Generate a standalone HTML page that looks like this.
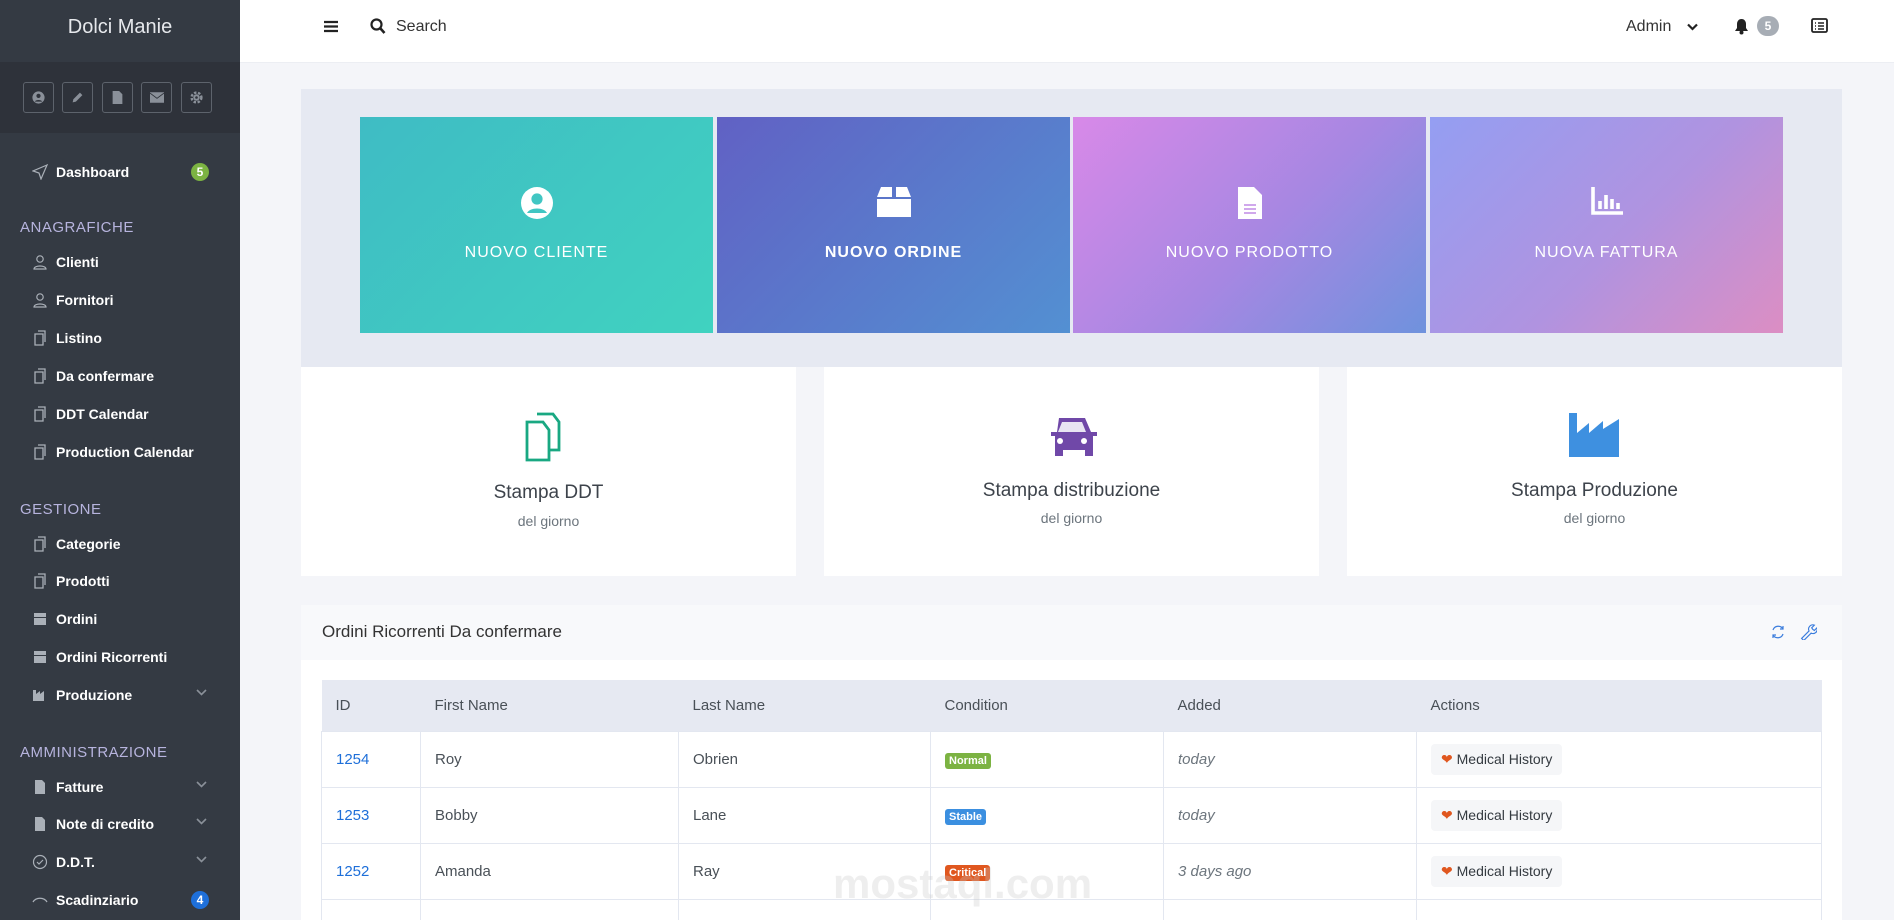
<!DOCTYPE html>
<html style="width:1894px;height:920px;overflow:hidden"><head><meta charset="utf-8"><style>
*{box-sizing:border-box;margin:0;padding:0}
body{width:1894px;height:920px;overflow:hidden;background:#f4f5f9;font-family:"Liberation Sans",sans-serif;position:relative;color:#495057}
.abs{position:absolute}
#sb{left:0;top:0;width:240px;height:920px;background:#343a43}
.logo{left:0;top:0;width:240px;height:62px;color:#e6e8ec;font-size:20px;text-align:center;line-height:54px}
.band{left:0;top:62px;width:240px;height:71px;background:#2e323a}
.ib{top:82px;width:31px;height:31px;border:1px solid #5d636c;border-radius:3px;display:flex;align-items:center;justify-content:center}
.item{left:56px;color:#fff;font-size:14px;font-weight:bold;height:20px;line-height:20px;margin-top:-10px}
.ico{left:32px;width:16px;height:16px;margin-top:-8px}
.sec{left:20px;color:#b7b4de;font-size:15px;letter-spacing:.5px;margin-top:-9px}
.chev{left:196px;margin-top:-6px}
.badge{border-radius:10px;color:#fff;font-size:12px;font-weight:bold;text-align:center}
#hd{left:240px;top:0;width:1654px;height:62px;background:#fff}
.tile{top:117px;height:216px;width:353px;color:#fff;text-align:center;font-size:16px;letter-spacing:1px}
.tile svg{position:absolute;left:50%;top:70px;transform:translateX(-50%)}
.tile span{position:absolute;left:0;right:0;top:127px}
.card{top:367px;height:209px;width:495px;background:#fff;text-align:center}
.card .t{position:absolute;left:0;right:0;font-size:19px;color:#3d434b}
.card .s{position:absolute;left:0;right:0;font-size:14px;color:#6c757d}
th,td{text-align:left;font-weight:normal;padding-left:14px}
table{border-collapse:collapse;position:absolute;left:321px;top:680px;width:1501px;font-size:15px}
th{height:51px;background:#e6e9f2;color:#495057}
td{height:56px;border:1px solid #e3e7f0;color:#495057}
.lbl{font-size:11px;font-weight:bold;color:#fff;padding:2px 4px;border-radius:3px}
.mh{display:inline-block;background:#f5f6f8;border-radius:4px;padding:7px 10px;font-size:14px;color:#343a40}
</style></head><body>
<div id="sb" class="abs">
<div class="logo abs">Dolci Manie</div>
<div class="band abs"></div>
<div class="ib abs" style="left:23px"><svg width="13" height="13" viewBox="0 0 16 16"><circle cx="8" cy="8" r="7.5" fill="#8a9099"/><circle cx="8" cy="6" r="2.6" fill="#2e323a"/><path d="M3.5 13c1-2.5 8-2.5 9 0" fill="#2e323a"/></svg></div>
<div class="ib abs" style="left:62px"><svg width="13" height="13" viewBox="0 0 16 16"><path d="M2 14l1-4 8-8 3 3-8 8z" fill="#8a9099"/></svg></div>
<div class="ib abs" style="left:102px"><svg width="11" height="13" viewBox="0 0 12 16"><path d="M0 0h8l4 4v12H0z" fill="#8a9099"/></svg></div>
<div class="ib abs" style="left:141px"><svg width="14" height="11" viewBox="0 0 16 12"><rect width="16" height="12" fill="#8a9099"/><path d="M0 1l8 6 8-6" stroke="#2e323a" fill="none"/></svg></div>
<div class="ib abs" style="left:181px"><svg width="13" height="13" viewBox="0 0 16 16"><circle cx="8" cy="8" r="6" fill="none" stroke="#8a9099" stroke-width="3" stroke-dasharray="3 2"/><circle cx="8" cy="8" r="4" fill="#8a9099"/><circle cx="8" cy="8" r="1.6" fill="#2e323a"/></svg></div>

<svg class="ico abs" style="top:172px" viewBox="0 0 16 16"><path d="M15 1L1 7l6 2 2 6z" fill="none" stroke="#aab0b8" stroke-width="1.2"/></svg>
<div class="item abs" style="top:172px">Dashboard</div>
<div class="badge abs" style="left:191px;top:163px;width:18px;height:18px;background:#7cb342;line-height:18px">5</div>

<div class="sec abs" style="top:228px">ANAGRAFICHE</div>
<div class="item abs" style="top:262px">Clienti</div>
<div class="item abs" style="top:300px">Fornitori</div>
<div class="item abs" style="top:338px">Listino</div>
<div class="item abs" style="top:376px">Da confermare</div>
<div class="item abs" style="top:414px">DDT Calendar</div>
<div class="item abs" style="top:452px">Production Calendar</div>
<div class="sec abs" style="top:510px">GESTIONE</div>
<div class="item abs" style="top:544px">Categorie</div>
<div class="item abs" style="top:581px">Prodotti</div>
<div class="item abs" style="top:619px">Ordini</div>
<div class="item abs" style="top:657px">Ordini Ricorrenti</div>
<div class="item abs" style="top:695px">Produzione</div>
<div class="sec abs" style="top:753px">AMMINISTRAZIONE</div>
<div class="item abs" style="top:787px">Fatture</div>
<div class="item abs" style="top:824px">Note di credito</div>
<div class="item abs" style="top:862px">D.D.T.</div>
<div class="item abs" style="top:900px">Scadinziario</div>
<div class="badge abs" style="left:191px;top:891px;width:18px;height:18px;background:#1e6fd9;line-height:18px">4</div>

<svg class="ico abs" style="top:262px" viewBox="0 0 16 16"><circle cx="8" cy="5" r="3.2" fill="none" stroke="#aab0b8" stroke-width="1.2"/><path d="M2 15c0-4 12-4 12 0z" fill="none" stroke="#aab0b8" stroke-width="1.2"/></svg>
<svg class="ico abs" style="top:300px" viewBox="0 0 16 16"><circle cx="8" cy="5" r="3.2" fill="none" stroke="#aab0b8" stroke-width="1.2"/><path d="M2 15c0-4 12-4 12 0z" fill="none" stroke="#aab0b8" stroke-width="1.2"/></svg>
<svg class="ico abs" style="top:338px" viewBox="0 0 16 16"><path d="M3 4h8v11H3zM6 1h7v11" fill="none" stroke="#aab0b8" stroke-width="1.3"/></svg>
<svg class="ico abs" style="top:376px" viewBox="0 0 16 16"><path d="M3 4h8v11H3zM6 1h7v11" fill="none" stroke="#aab0b8" stroke-width="1.3"/></svg>
<svg class="ico abs" style="top:414px" viewBox="0 0 16 16"><path d="M3 4h8v11H3zM6 1h7v11" fill="none" stroke="#aab0b8" stroke-width="1.3"/></svg>
<svg class="ico abs" style="top:452px" viewBox="0 0 16 16"><path d="M3 4h8v11H3zM6 1h7v11" fill="none" stroke="#aab0b8" stroke-width="1.3"/></svg>
<svg class="ico abs" style="top:544px" viewBox="0 0 16 16"><path d="M3 4h8v11H3zM6 1h7v11" fill="none" stroke="#aab0b8" stroke-width="1.3"/></svg>
<svg class="ico abs" style="top:581px" viewBox="0 0 16 16"><path d="M3 4h8v11H3zM6 1h7v11" fill="none" stroke="#aab0b8" stroke-width="1.3"/></svg>
<svg class="ico abs" style="top:619px" viewBox="0 0 16 16"><path d="M2 2h12v4H2zM2 7h12v7H2z" fill="#aab0b8"/></svg>
<svg class="ico abs" style="top:657px" viewBox="0 0 16 16"><path d="M2 2h12v4H2zM2 7h12v7H2z" fill="#aab0b8"/></svg>
<svg class="ico abs" style="top:695px" viewBox="0 0 16 16"><path d="M1 3h3v4l4-3v3l4-3v10H1z" fill="#aab0b8"/></svg>
<svg class="ico abs" style="top:787px" viewBox="0 0 16 16"><path d="M3 1h7l3 3v11H3z" fill="#aab0b8"/></svg>
<svg class="ico abs" style="top:824px" viewBox="0 0 16 16"><path d="M3 1h7l3 3v11H3z" fill="#aab0b8"/></svg>
<svg class="ico abs" style="top:862px" viewBox="0 0 16 16"><circle cx="8" cy="8" r="6.5" fill="none" stroke="#aab0b8" stroke-width="1.2"/><path d="M5 8l2 2 4-4" fill="none" stroke="#aab0b8" stroke-width="1.2"/></svg>
<svg class="ico abs" style="top:900px" viewBox="0 0 16 16"><path d="M1 10c3-5 11-5 14 0" fill="none" stroke="#aab0b8" stroke-width="1.3"/></svg>
<svg class="chev abs" style="top:695px" width="11" height="7" viewBox="0 0 11 7"><path d="M1 1l4.5 4.5L10 1" stroke="#8a9099" stroke-width="1.6" fill="none"/></svg>
<svg class="chev abs" style="top:787px" width="11" height="7" viewBox="0 0 11 7"><path d="M1 1l4.5 4.5L10 1" stroke="#8a9099" stroke-width="1.6" fill="none"/></svg>
<svg class="chev abs" style="top:824px" width="11" height="7" viewBox="0 0 11 7"><path d="M1 1l4.5 4.5L10 1" stroke="#8a9099" stroke-width="1.6" fill="none"/></svg>
<svg class="chev abs" style="top:862px" width="11" height="7" viewBox="0 0 11 7"><path d="M1 1l4.5 4.5L10 1" stroke="#8a9099" stroke-width="1.6" fill="none"/></svg>
</div>

<div id="hd" class="abs">
<svg class="abs" style="left:84px;top:20px" width="14" height="13" viewBox="0 0 14 13"><path d="M0 2h14M0 6.5h14M0 11h14" stroke="#222" stroke-width="2.2"/></svg>
<svg class="abs" style="left:130px;top:18px" width="16" height="17" viewBox="0 0 16 17"><circle cx="6.5" cy="6.5" r="5" stroke="#222" stroke-width="2.2" fill="none"/><path d="M10 10l4.5 5" stroke="#222" stroke-width="2.6"/></svg>
<div class="abs" style="left:156px;top:18px;font-size:16px;color:#333">Search</div>
<div class="abs" style="left:1386px;top:18px;font-size:16px;color:#333">Admin</div>
<svg class="abs" style="left:1447px;top:23px" width="11" height="8" viewBox="0 0 11 8"><path d="M1 1.5l4.5 4.5L10 1.5" stroke="#222" stroke-width="2.2" fill="none"/></svg>
<svg class="abs" style="left:1494px;top:18px" width="15" height="17" viewBox="0 0 15 17"><path d="M7.5 1c-3 0-4.5 2.5-4.5 5v4L1 13h13l-2-3V6c0-2.5-1.5-5-4.5-5z" fill="#222"/><circle cx="7.5" cy="14.5" r="2" fill="#222"/></svg>
<div class="badge abs" style="left:1517px;top:16px;width:22px;height:20px;background:#a7adb5;line-height:20px">5</div>
<svg class="abs" style="left:1571px;top:18px" width="17" height="15" viewBox="0 0 17 15"><rect x="1" y="1" width="15" height="13" rx="1.5" stroke="#222" stroke-width="1.8" fill="none"/><path d="M4 5h1M7 5h6M4 8h1M7 8h6M4 11h1M7 11h6" stroke="#222" stroke-width="1.6"/></svg>
</div>
<div class="abs" style="left:240px;top:62px;width:1654px;height:1px;background:#eceef3"></div>

<div class="abs" style="left:301px;top:89px;width:1541px;height:278px;background:#e6e9f2"></div>
<div class="tile abs" style="left:360px;background:linear-gradient(135deg,#3fbcc4,#40d2c0)"><svg width="32" height="32" viewBox="0 0 16 16"><circle cx="8" cy="8" r="8" fill="#fff"/><circle cx="8" cy="6" r="2.8" fill="#41c6c3"/><path d="M3 13c1.5-3 8.5-3 10 0" fill="#41c6c3"/></svg><span>NUOVO CLIENTE</span></div>
<div class="tile abs" style="left:717px;background:linear-gradient(135deg,#6161c4,#5390d2)"><svg width="34" height="30" viewBox="0 0 17 15"><path d="M2 0h5.5v5H0zM9.5 0H15l2 5H9.5zM0 6h17v9H0z" fill="#fff"/></svg><span style="font-weight:bold">NUOVO ORDINE</span></div>
<div class="tile abs" style="left:1073px;background:linear-gradient(135deg,#d889e8,#a687e2 55%,#6f92dd)"><svg width="24" height="32" viewBox="0 0 12 16"><path d="M0 0h8l4 4v12H0z" fill="#fff"/><path d="M3 9h6M3 11h6M3 13h6" stroke="#c08be6" stroke-width=".8"/></svg><span>NUOVO PRODOTTO</span></div>
<div class="tile abs" style="left:1430px;background:linear-gradient(135deg,#949ef2,#b093e0 55%,#dc8ec3)"><svg width="32" height="28" viewBox="0 0 16 14"><path d="M1 0v13h15" stroke="#fff" stroke-width="1.8" fill="none"/><path d="M4.5 7v4M7.5 4v7M10.5 6v5M13.5 8v3" stroke="#fff" stroke-width="1.8"/></svg><span>NUOVA FATTURA</span></div>

<div class="card abs" style="left:301px"><svg class="abs" style="left:224px;top:45px" width="50" height="50" viewBox="0 0 25 25"><path d="M1 5h8l3 4v15H1z" fill="none" stroke="#19a882" stroke-width="1.4"/><path d="M6 1h8l3 4v14h-5" fill="none" stroke="#19a882" stroke-width="1.4"/></svg><div class="t" style="top:115px">Stampa DDT</div><div class="s" style="top:146px">del giorno</div></div>
<div class="card abs" style="left:824px"><svg class="abs" style="left:223px;top:49px" width="50" height="40" viewBox="0 0 25 20"><path d="M6 1h13l3 7h3v2h-2v10h-4v-3H8v3H4V10H2V8h3z" fill="#7048a8"/><path d="M7.5 3h10l2 5h-14z" fill="#e8e4f2"/><circle cx="6.5" cy="12.5" r="1.5" fill="#fff"/><circle cx="18.5" cy="12.5" r="1.5" fill="#fff"/></svg><div class="t" style="top:113px">Stampa distribuzione</div><div class="s" style="top:143px">del giorno</div></div>
<div class="card abs" style="left:1347px"><svg class="abs" style="left:222px;top:46px" width="50" height="44" viewBox="0 0 25 22"><path d="M0 0h4v10l6-5v5l7-6v4l8-5v19H0z" fill="#3e90e0"/></svg><div class="t" style="top:113px">Stampa Produzione</div><div class="s" style="top:143px">del giorno</div></div>

<div class="abs" style="left:301px;top:605px;width:1541px;height:320px;background:#fff"></div>
<div class="abs" style="left:301px;top:605px;width:1541px;height:55px;background:#f8f9fb"></div>
<div class="abs" style="left:322px;top:622px;font-size:17px;color:#333">Ordini Ricorrenti Da confermare</div>
<svg class="abs" style="left:1770px;top:624px" width="16" height="16" viewBox="0 0 16 16"><path d="M13 5A5.5 5.5 0 0 0 3 6M3 11a5.5 5.5 0 0 0 10-1" stroke="#3b7ddd" stroke-width="1.2" fill="none"/><path d="M13 2v3h-3M3 14v-3h3" stroke="#3b7ddd" stroke-width="1.2" fill="none"/></svg>
<svg class="abs" style="left:1800px;top:623px" width="17" height="17" viewBox="0 0 16 16"><path d="M1.5 14.5l7-7a4 4 0 0 1 5-5.5l-2.5 2.5 1 1.5 1.5 1 2.5-2.5a4 4 0 0 1-5.5 5l-7 7z" stroke="#3b7ddd" stroke-width="1.1" fill="none"/></svg>

<table>
<tr><th style="width:99px">ID</th><th style="width:258px">First Name</th><th style="width:252px">Last Name</th><th style="width:233px">Condition</th><th style="width:253px">Added</th><th>Actions</th></tr>
<tr><td style="color:#1e6fd9">1254</td><td>Roy</td><td>Obrien</td><td><span class="lbl" style="background:#7cb342">Normal</span></td><td style="font-style:italic;color:#6c757d">today</td><td><span class="mh"><span style="color:#e0571f">❤</span> Medical History</span></td></tr>
<tr><td style="color:#1e6fd9">1253</td><td>Bobby</td><td>Lane</td><td><span class="lbl" style="background:#3b8fe0">Stable</span></td><td style="font-style:italic;color:#6c757d">today</td><td><span class="mh"><span style="color:#e0571f">❤</span> Medical History</span></td></tr>
<tr><td style="color:#1e6fd9">1252</td><td>Amanda</td><td>Ray</td><td><span class="lbl" style="background:#e0571f">Critical</span></td><td style="font-style:italic;color:#6c757d">3 days ago</td><td><span class="mh"><span style="color:#e0571f">❤</span> Medical History</span></td></tr>
<tr><td style="height:30px"></td><td></td><td></td><td></td><td></td><td></td></tr>
</table>
<div class="abs" style="left:833px;top:860px;font-size:42px;font-weight:bold;color:rgba(200,200,200,.3)">mostaql.com</div>
</body></html>
